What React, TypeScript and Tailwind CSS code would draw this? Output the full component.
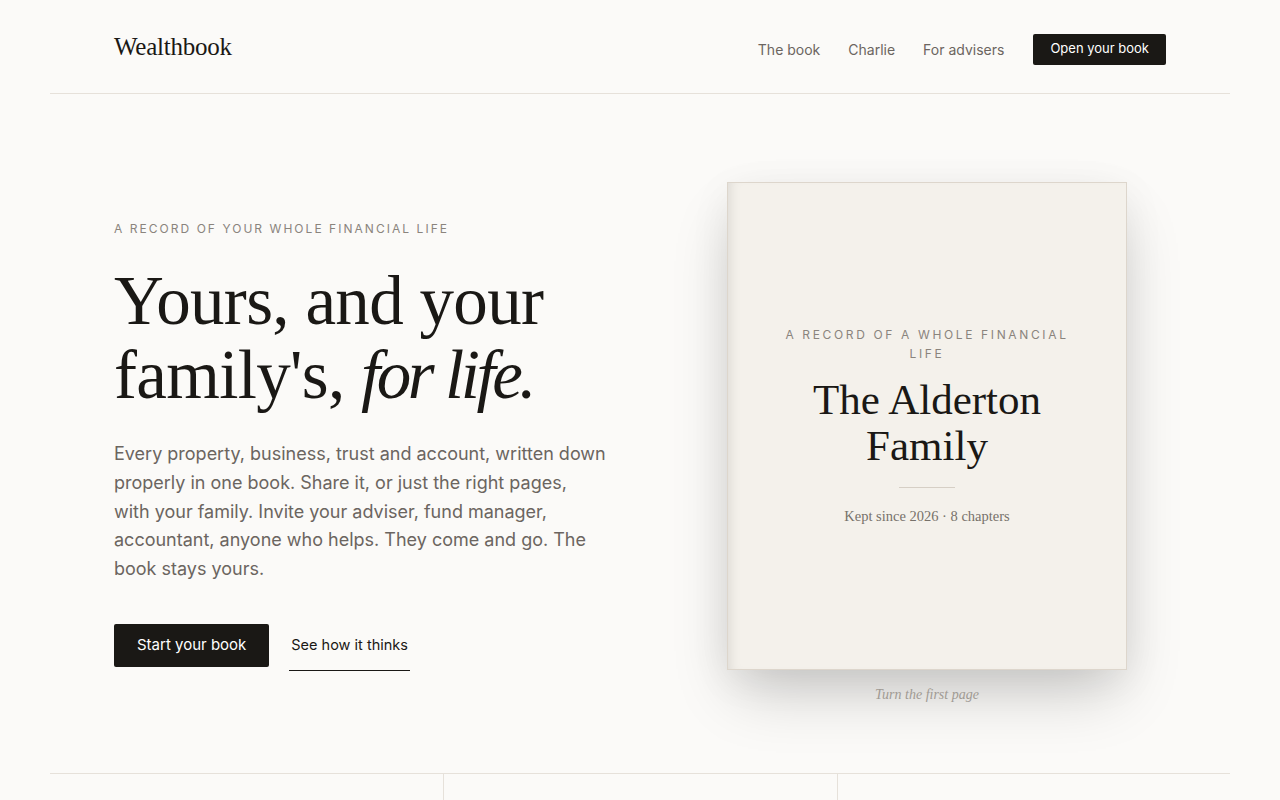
import React from "react";

const serif = "font-['Liberation_Serif',serif]";
const sans = "font-['Inter',sans-serif]";

function Header() {
  return (
    <header className="flex h-[94px] items-center justify-between border-b border-[#e6e1da] px-16">
      <a className={`${serif} text-[25px] tracking-[-0.01em] text-[#1a1815]`}>Wealthbook</a>
      <nav className={`${sans} mt-[5px] flex items-center text-[14px] text-[#6b6560]`}>
        <a className="mr-[28px]">The book</a>
        <a className="mr-[28px]">Charlie</a>
        <a className="mr-[29px]">For advisers</a>
        <a className="flex h-[31px] items-center rounded-[2px] bg-[#1a1815] px-[17px] text-[13px] text-white">
          Open your book
        </a>
      </nav>
    </header>
  );
}

function Book() {
  return (
    <div className="flex flex-col items-center">
      <div className="flex h-[488px] w-[400px] flex-col items-center justify-center border border-[#ddd6cc] bg-[#f4f1eb] px-10 text-center shadow-[inset_10px_0_12px_-8px_rgba(0,0,0,0.10),0_30px_60px_-10px_rgba(0,0,0,0.20),0_10px_40px_rgba(0,0,0,0.06)]">
        <p className={`${sans} max-w-[310px] text-[12px] leading-[19px] tracking-[0.22em] text-[#8a847d]`}>
          A RECORD OF A WHOLE FINANCIAL LIFE
        </p>
        <h2 className={`${serif} mt-[14px] text-[43px] leading-[46px] text-[#1a1815]`}>
          The Alderton
          <br />
          Family
        </h2>
        <div className="mt-[18px] h-px w-14 bg-[#d6cfc5]" />
        <p className={`${serif} mt-[18px] text-[14.5px] text-[#77716a]`}>Kept since 2026 · 8 chapters</p>
      </div>
      <p className={`${serif} mt-[14px] text-[14px] italic text-[#a09a93]`}>Turn the first page</p>
    </div>
  );
}

function Hero() {
  return (
    <section className="grid grid-cols-[minmax(0,1fr)_478px] gap-16 px-16 pb-[68px] pt-[88px]">
      <div className="mt-[39px] self-start">
        <p className={`${sans} text-[12px] leading-4 tracking-[0.17em] text-[#8a847d]`}>
          A RECORD OF YOUR WHOLE FINANCIAL LIFE
        </p>
        <h1 className={`${serif} mt-[27px] text-[69px] leading-[74px] tracking-[-0.01em] text-[#1a1815]`}>
          Yours, and your
          <br />
          family's, <em className="tracking-[-0.05em]">for life.</em>
        </h1>
        <p className={`${sans} mt-[28px] max-w-[520px] text-[18px] leading-[28.8px] text-[#6b6560]`}>
          Every property, business, trust and account, written down
          <br />
          properly in one book. Share it, or just the right pages,
          <br />
          with your family. Invite your adviser, fund manager,
          <br />
          accountant, anyone who helps. They come and go. The
          <br />
          book stays yours.
        </p>
        <div className={`${sans} mt-[40px] flex items-start gap-5 text-[15px]`}>
          <a className="flex h-[43px] items-center rounded-[2px] bg-[#1a1815] px-[23px] text-white">Start your book</a>
          <a className="border-b border-[#1a1815] px-[2px] pb-[14px] pt-[10px] text-[14.5px] leading-[22px] text-[#1a1815]">
            See how it thinks
          </a>
        </div>
      </div>
      <Book />
    </section>
  );
}

function Pillars() {
  const cells = ["", "", ""];
  return (
    <section className="grid grid-cols-3 border-t border-[#e6e1da]">
      {cells.map((_, i) => (
        <div key={i} className={`h-[240px] ${i > 0 ? "border-l border-[#e6e1da]" : ""}`} />
      ))}
    </section>
  );
}

export default function App() {
  return (
    <div className="min-h-screen bg-[#fbfaf8]">
      <div className="mx-auto max-w-[1180px]">
        <Header />
        <Hero />
        <Pillars />
      </div>
    </div>
  );
}
